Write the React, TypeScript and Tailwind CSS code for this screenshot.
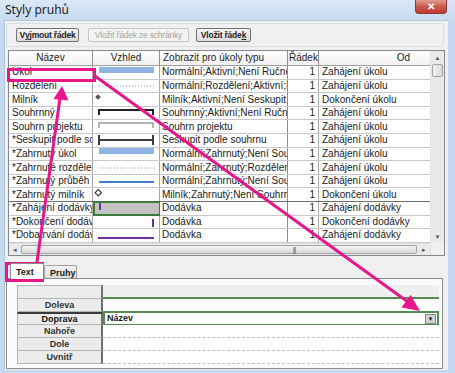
import React from 'react';

type Look =
  | 'task'
  | 'split'
  | 'milestone'
  | 'summary'
  | 'project'
  | 'group'
  | 'incTask'
  | 'incSplit'
  | 'progress'
  | 'incMilestone'
  | 'delStart'
  | 'delEnd'
  | 'delDur';

type Row = { name: string; look: Look; show: string; od: string };

const ROWS: Row[] = [
  { name: 'Úkol', look: 'task', show: 'Normální;Aktivní;Není Ručně naplánováno', od: 'Zahájení úkolu' },
  { name: 'Rozdělení', look: 'split', show: 'Normální;Rozdělení;Aktivní;Není', od: 'Zahájení úkolu' },
  { name: 'Milník', look: 'milestone', show: 'Milník;Aktivní;Není Seskupit podle', od: 'Dokončení úkolu' },
  { name: 'Souhrnný', look: 'summary', show: 'Souhrnný;Aktivní;Není Ručně naplánováno', od: 'Zahájení úkolu' },
  { name: 'Souhrn projektu', look: 'project', show: 'Souhrn projektu', od: 'Zahájení úkolu' },
  { name: '*Seskupit podle souhrnu', look: 'group', show: 'Seskupit podle souhrnu', od: 'Zahájení úkolu' },
  { name: '*Zahrnutý úkol', look: 'incTask', show: 'Normální;Zahrnutý;Není Souhrnný', od: 'Zahájení úkolu' },
  { name: '*Zahrnuté rozdělení', look: 'incSplit', show: 'Normální;Zahrnutý;Rozdělení;Není', od: 'Zahájení úkolu' },
  { name: '*Zahrnutý průběh', look: 'progress', show: 'Normální;Zahrnutý;Není Souhrnný', od: 'Zahájení úkolu' },
  { name: '*Zahrnutý milník', look: 'incMilestone', show: 'Milník;Zahrnutý;Není Souhrnný', od: 'Dokončení úkolu' },
  { name: '*Zahájení dodávky', look: 'delStart', show: 'Dodávka', od: 'Zahájení dodávky' },
  { name: '*Dokončení dodávky', look: 'delEnd', show: 'Dodávka', od: 'Dokončení dodávky' },
  { name: '*Dobatrvání dodávky', look: 'delDur', show: 'Dodávka', od: 'Zahájení dodávky' },
];

const LABELS = ['Doleva', 'Doprava', 'Nahoře', 'Dole', 'Uvnitř'];

// little bar preview drawn in the "Vzhled" column
const BarLook: React.FC<{ look: Look }> = ({ look }) => {
  const bracket = (color: string) => (
    <>
      <rect x="5" y="2" width="56" height="2" fill={color} />
      <rect x="5" y="2" width="2" height="6" fill={color} />
      <rect x="59" y="2" width="2" height="6" fill={color} />
    </>
  );
  return (
    <svg width="66" height="13" viewBox="0 0 66 13" className="block shrink-0">
      {(look === 'task' || look === 'incTask') && <rect x="6" y="1" width="55" height="6" fill="#8db4e2" />}
      {(look === 'split' || look === 'incSplit') && (
        <line x1="6" y1="7" x2="61" y2="7" stroke="#6e9fd8" strokeWidth="1" strokeDasharray="1 2" />
      )}
      {look === 'milestone' && <rect x="3" y="2" width="4" height="4" fill="#555" transform="rotate(45 5 4)" />}
      {look === 'incMilestone' && (
        <rect x="3" y="2.5" width="4.5" height="4.5" fill="#fff" stroke="#222" strokeWidth="1" transform="rotate(45 5.25 4.75)" />
      )}
      {look === 'summary' && bracket('#222')}
      {look === 'project' && bracket('#b4b4b4')}
      {look === 'group' && (
        <>
          <rect x="5" y="5" width="56" height="2" fill="#3c3c3c" />
          <rect x="5" y="1" width="2" height="10" fill="#3c3c3c" />
          <rect x="59" y="1" width="2" height="10" fill="#3c3c3c" />
        </>
      )}
      {look === 'progress' && <rect x="6" y="6" width="55" height="2" fill="#3f7fcf" />}
      {look === 'delStart' && <rect x="4" y="1" width="2" height="7" fill="#7030a0" />}
      {look === 'delEnd' && <rect x="59" y="4" width="2" height="8" fill="#7030a0" />}
      {look === 'delDur' && <rect x="5" y="8" width="56" height="2" fill="#7030a0" />}
    </svg>
  );
};

const Btn: React.FC<{ w: string; disabled?: boolean; children: React.ReactNode }> = ({ w, disabled, children }) => (
  <div
    className={`${w} h-[14px] flex items-center justify-center whitespace-nowrap rounded-[2px] border text-[8.5px] tracking-[-0.2px] font-bold leading-none ${
      disabled
        ? 'border-[#c2c6c9] text-[#a3a3a3] bg-[#f4f4f4] font-normal'
        : 'border-[#707070] text-[#1e1e1e] bg-gradient-to-b from-[#f6f6f6] to-[#dcdcdc]'
    }`}
  >
    {children}
  </div>
);

export default function App() {
  return (
    <div
      className="w-[455px] h-[373px] relative overflow-hidden bg-[#c5d9f0] text-[#1a1a1a]"
      style={{ fontFamily: '"Liberation Sans", Arial, sans-serif' }}
    >
      {/* title bar */}
      <div className="h-[20px] flex items-start bg-gradient-to-b from-[#dbe7f5] to-[#c8dbf1]">
        <div className="pl-[5px] pt-[3px] text-[12px] leading-[14px] text-[#1e1e1e]" style={{ fontFamily: '"Noto Sans", sans-serif' }}>
          Styly pruhů
        </div>
        <div className="ml-auto mr-[8px] w-[32px] h-[14px] rounded-b-[4px] border border-t-0 border-[#8a3a33] bg-gradient-to-b from-[#e19b91] via-[#cc5a4c] to-[#c0392b] flex items-center justify-center text-white text-[10px] font-bold leading-none">
          ✕
        </div>
      </div>

      {/* client area */}
      <div className="ml-[4px] w-[444px] h-[350px] bg-[#f0f0f0] border-t border-l border-[#b6c6d8]">
        {/* button strip */}
        <div className="mt-[2px] ml-[1px] w-[438px] h-[24px] border border-[#d5dfe5] rounded-[3px] flex items-center pl-[9px]">
          <Btn w="w-[63px]">
            V<span className="underline">y</span>jmout řádek
          </Btn>
          <div className="w-[9px]" />
          <Btn w="w-[101px]" disabled>
            Vložit řádek ze schránky
          </Btn>
          <div className="w-[7px]" />
          <Btn w="w-[55px]">
            Vložit řáde<span className="underline">k</span>
          </Btn>
        </div>

        {/* grid */}
        <div className="mt-[3px] ml-[3px] w-[437px] h-[206px] border border-[#828790] bg-white flex text-[10px] leading-none">
          <div className="w-[421px] flex flex-col">
            {/* header */}
            <div className="h-[16px] flex bg-gradient-to-b from-[#ffffff] to-[#f1f1f1] border-b border-[#a0a0a0] text-[#1e1e1e]">
              <div className="w-[84px] border-r border-[#8f8f8f] flex items-center justify-center">Název</div>
              <div className="w-[67px] border-r border-[#8f8f8f] flex items-center justify-center">Vzhled</div>
              <div className="w-[128px] border-r border-[#8f8f8f] flex items-center pl-[3px] whitespace-nowrap overflow-hidden">
                Zobrazit pro úkoly typu
              </div>
              <div className="w-[31px] border-r border-[#8f8f8f] flex items-center pl-[1px] overflow-hidden">Řádek</div>
              <div className="flex-1 flex items-center justify-end pr-[20px]">Od</div>
            </div>
            {ROWS.map((r, i) => {
              const sel = r.look === 'delStart';
              return (
                <div
                  key={r.name}
                  className={`h-[13.6px] flex border-b ${i === 9 ? 'border-[#6e6e6e]' : 'border-[#c9c9c9]'}`}
                >
                  <div className="w-[84px] border-r border-[#a8a8a8] pl-[3px] flex items-center whitespace-nowrap overflow-hidden">
                    {r.name}
                  </div>
                  <div
                    className={`w-[67px] border-r flex items-center overflow-hidden ${
                      sel ? 'bg-[#c3c3c3] border-[#3d7a3d] border-2 -my-px' : 'border-[#a8a8a8]'
                    }`}
                  >
                    <BarLook look={r.look} />
                  </div>
                  <div className="w-[128px] border-r border-[#8a8a8a] pl-[2px] flex items-center whitespace-nowrap overflow-hidden">
                    {r.show}
                  </div>
                  <div className="w-[31px] border-r border-[#a8a8a8] pr-[3px] flex items-center justify-end">1</div>
                  <div className="flex-1 pl-[3px] flex items-center whitespace-nowrap overflow-hidden">{r.od}</div>
                </div>
              );
            })}
            <div className="flex-1" />
            {/* horizontal scrollbar */}
            <div className="h-[13px] flex bg-[#eaeaea] border-t border-[#e0e0e0]">
              <div className="w-[12px] flex items-center justify-center text-[7px] text-[#555]">◂</div>
              <div className="flex-1 my-px rounded-[2px] border border-[#a4a4a4] bg-gradient-to-b from-[#f3f3f3] to-[#dadada] flex items-center justify-center">
                <span className="text-[7px] text-[#666] leading-none tracking-[-1px] ml-[150px]">|||</span>
              </div>
              <div className="w-[13px] flex items-center justify-center text-[7px] text-[#555]">▸</div>
            </div>
          </div>
          {/* vertical scrollbar */}
          <div className="w-[14px] flex flex-col bg-[#eaeaea] border-l border-[#e0e0e0]">
            <div className="h-[13px] flex items-center justify-center text-[6px] text-[#555]">▲</div>
            <div className="h-[13px] mx-px rounded-[2px] border border-[#a4a4a4] bg-gradient-to-r from-[#f3f3f3] to-[#dadada]" />
            <div className="flex-1" />
            <div className="h-[10px] flex items-center justify-center text-[6px] text-[#555]">▼</div>
            <div className="h-[13px] bg-[#f0f0f0]" />
          </div>
        </div>

        {/* tabs */}
        <div className="mt-[8px] ml-[5px] h-[14px] flex items-end text-[9px] font-bold leading-none">
          <div className="w-[34px] h-[16px] -mb-px bg-white border border-b-0 border-[#8c8c8c] rounded-t-[2px] pl-[5px] pt-[4px] relative z-10">
            Text
          </div>
          <div className="w-[33px] h-[13px] border border-b-0 border-[#a0a0a0] rounded-t-[2px] bg-gradient-to-b from-[#f4f4f4] to-[#dedede] pl-[5px] pt-[3px]">
            Pruhy
          </div>
        </div>

        {/* tab page */}
        <div className="ml-[1px] w-[437px] h-[91px] border border-[#8c8c8c] bg-[#fbfbfb] pt-[6px] pl-[10px]">
          <div className="w-[422px] flex flex-col">
            <div className="h-[14px] flex">
              <div className="w-[86px] bg-[#ececec] border border-[#b4b4b4] border-r-2 border-r-[#6f6f6f]" />
              <div className="flex-1 bg-[#efefef] border-b-2 border-[#538d53]" />
            </div>
            {LABELS.map((l) => {
              const sel = l === 'Doprava';
              return (
                <div key={l} className="h-[13px] flex">
                  <div
                    className={`w-[86px] flex items-center justify-center text-[9px] leading-none bg-[#ececec] border-x border-b border-[#b4b4b4] border-r-2 border-r-[#6f6f6f] ${
                      sel ? 'font-extrabold text-[#111] border-t-2 border-t-[#3b3b3b]' : 'font-bold text-[#333]'
                    }`}
                  >
                    {l}
                  </div>
                  {sel ? (
                    <div className="flex-1 -mt-px h-[15px] bg-white border-2 border-[#538d53] flex items-center pl-[2px] text-[9px]">
                      <span className="font-bold">Název</span>
                      <div className="ml-auto mr-[1px] w-[11px] h-[10px] bg-[#d4d4d4] border border-[#8a8a8a] flex items-center justify-center text-[6px] leading-none">
                        ▼
                      </div>
                    </div>
                  ) : (
                    <div className="flex-1 bg-white border-b border-dashed border-[#bdbdbd]" />
                  )}
                </div>
              );
            })}
          </div>
        </div>
      </div>

      {/* callouts */}
      <svg width="455" height="373" className="absolute left-0 top-0 pointer-events-none">
        <g fill="none" stroke="#e5178a" strokeWidth="3">
          <rect x="8.5" y="69.5" width="86" height="11" />
          <rect x="6.5" y="263.5" width="36" height="17" />
          <line x1="37" y1="262" x2="60" y2="98" />
          <line x1="95" y1="76" x2="408" y2="302" />
        </g>
        <g fill="#e5178a">
          <polygon points="62,86 68.5,100.5 53.5,99" />
          <polygon points="420,311 401.5,307.5 410.5,295" />
        </g>
      </svg>
    </div>
  );
}
